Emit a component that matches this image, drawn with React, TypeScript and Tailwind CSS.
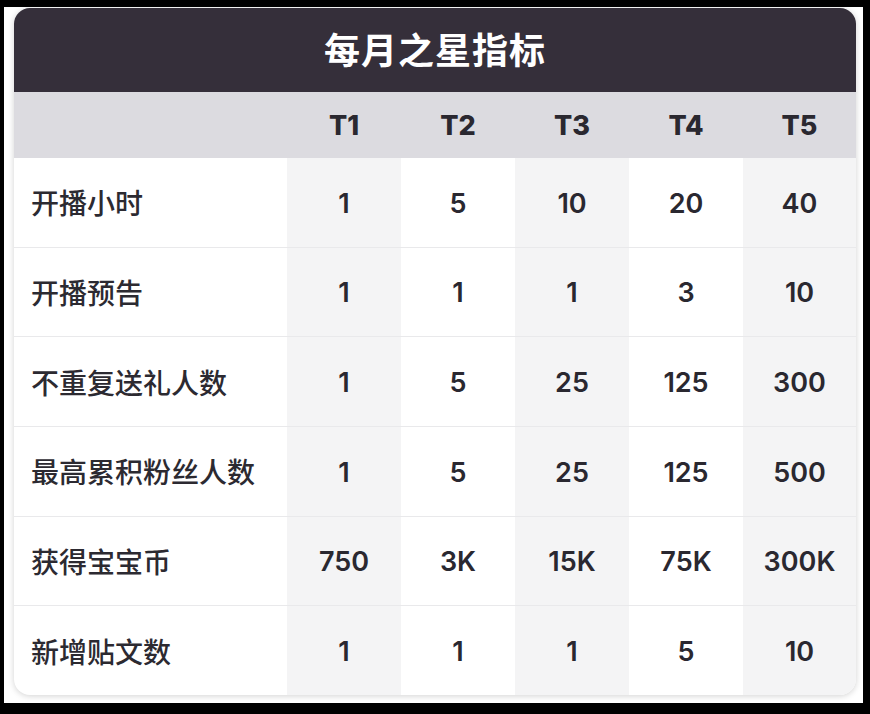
import React from "react";

const cols = ["T1", "T2", "T3", "T4", "T5"];
const rows: [string, string[]][] = [
  ["开播小时", ["1", "5", "10", "20", "40"]],
  ["开播预告", ["1", "1", "1", "3", "10"]],
  ["不重复送礼人数", ["1", "5", "25", "125", "300"]],
  ["最高累积粉丝人数", ["1", "5", "25", "125", "500"]],
  ["获得宝宝币", ["750", "3K", "15K", "75K", "300K"]],
  ["新增贴文数", ["1", "1", "1", "5", "10"]],
];

const cjk = { fontFamily: '"Noto Sans CJK SC", "Noto Sans", sans-serif' };
const num = { fontFamily: 'Inter, "Noto Sans", "Liberation Sans", sans-serif' };

export default function App() {
  return (
    <div className="w-[870px] h-[714px] bg-black pt-[7px] pl-[4px] pr-[7px] pb-[11px]">
      <div className="w-full h-full bg-white pl-[10px] pt-[1px] pr-[7px] pb-[8px]">
        <div className="w-[842px] h-[687px] rounded-[16px] overflow-hidden bg-white shadow-[0_1px_6px_rgba(0,0,0,0.18)] flex flex-col">
          <div
            className="h-[84px] bg-[#352f3a] flex items-center justify-center pb-[4px] text-white text-[36px] font-semibold tracking-[1px]"
            style={cjk}
          >
            每月之星指标
          </div>
          <div className="h-[66px] bg-[#dcdbe0] grid grid-cols-[273px_114px_114px_114px_114px_113px]">
            <div />
            {cols.map((c) => (
              <div
                key={c}
                className="flex items-center justify-center pt-[2px] text-[27px] font-extrabold text-[#2a2830]"
                style={num}
              >
                {c}
              </div>
            ))}
          </div>
          <div className="flex-1 flex flex-col">
            {rows.map(([label, vals], i) => (
              <div
                key={label}
                className={`flex-1 grid grid-cols-[273px_114px_114px_114px_114px_113px] ${
                  i < rows.length - 1 ? "border-b border-[#e9e9eb]" : ""
                }`}
              >
                <div
                  className="flex items-center pl-[17px] text-[28px] font-medium text-[#2c2a31]"
                  style={cjk}
                >
                  {label}
                </div>
                {vals.map((v, j) => (
                  <div
                    key={j}
                    className={`flex items-center justify-center pt-[3px] text-[27px] font-semibold text-[#2a2830] ${
                      j % 2 === 0 ? "bg-[#f4f4f5]" : "bg-white"
                    }`}
                    style={num}
                  >
                    {v}
                  </div>
                ))}
              </div>
            ))}
          </div>
        </div>
      </div>
    </div>
  );
}
